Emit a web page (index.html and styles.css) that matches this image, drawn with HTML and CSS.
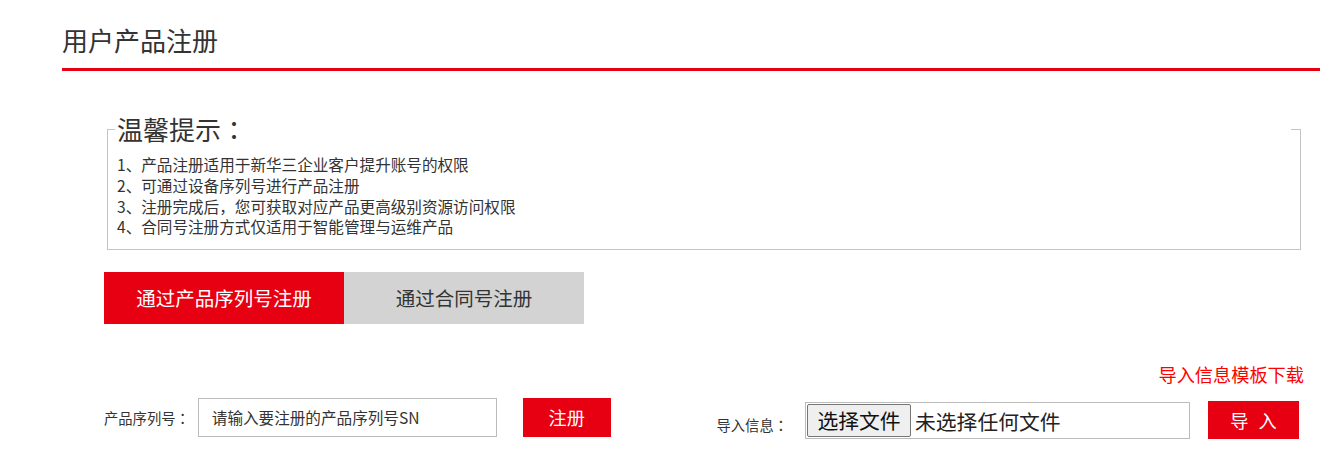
FILE: index.html
```html
<!DOCTYPE html>
<html lang="zh-CN">
<head>
<meta charset="utf-8">
<title>用户产品注册</title>
<link rel="stylesheet" href="styles.css">
</head>
<body>
<div class="page">
  <div class="header"><h1 class="title">用户产品注册</h1></div>
  <div class="content">
    <fieldset class="tips">
      <legend class="tips-legend">温馨提示<span class="punct" lang="zh-TW">：</span></legend>
      <ul class="tips-list">
        <li>1、产品注册适用于新华三企业客户提升账号的权限</li>
        <li>2、可通过设备序列号进行产品注册</li>
        <li>3、注册完成后，您可获取对应产品更高级别资源访问权限</li>
        <li>4、合同号注册方式仅适用于智能管理与运维产品</li>
      </ul>
    </fieldset>
    <div class="tabs">
      <div class="tab tab-active">通过产品序列号注册</div>
      <div class="tab">通过合同号注册</div>
    </div>
    <div class="link-row"><a class="tpl-link" href="#">导入信息模板下载</a></div>
    <div class="form-row">
      <div class="sn-form">
        <span class="field-label">产品序列号<span class="punct" lang="zh-TW">：</span></span>
        <div class="text-input">请输入要注册的产品序列号SN</div>
        <div class="btn btn-reg">注册</div>
      </div>
      <div class="import-form">
        <span class="field-label import-label">导入信息<span class="punct" lang="zh-TW">：</span></span>
        <div class="file-box">
          <span class="file-btn">选择文件</span>
          <span class="file-text">未选择任何文件</span>
        </div>
        <div class="btn btn-import">导 入</div>
      </div>
    </div>
  </div>
</div>
</body>
</html>
```
FILE: styles.css
```css
* { box-sizing: border-box; }
body {
  margin: 0;
  font-family: "Noto Sans CJK SC", "Noto Sans", sans-serif;
  color: #333;
  background: #fff;
}
.punct { font-family: "Noto Sans CJK TC", "Noto Sans CJK SC", sans-serif; }
.page { padding-left: 62px; }
.header {
  height: 71px;
  padding-top: 22px;
  border-bottom: 3px solid #e60012;
}
.title {
  margin: 0;
  font-size: 26px;
  font-weight: normal;
  line-height: 36px;
  color: #333;
}
.content { padding: 0 16px 0 42px; }
.tips {
  margin: 44px 3px 0 3px;
  padding: 0 10px 12px 9px;
  border: 1px solid #c4c4c4;
}
.tips-legend {
  width: calc(100% + 3px);
  margin-left: -2px;
  padding: 0 2px;
  font-size: 26px;
  line-height: 28px;
  color: #333;
}
.tips-list {
  list-style: none;
  margin: 11px 0 0;
  padding: 0;
  font-size: 15.6px;
  line-height: 20.8px;
  color: #333;
}
.tabs {
  display: flex;
  margin-top: 22px;
}
.tab {
  width: 240px;
  height: 52px;
  line-height: 52px;
  text-align: center;
  font-size: 19.5px;
  background: #d3d3d3;
  color: #333;
}
.tab-active { background: #e60012; color: #fff; }
.link-row {
  margin-top: 38px;
  text-align: right;
  line-height: 24px;
}
.tpl-link {
  font-size: 18.2px;
  color: #f00;
  text-decoration: none;
}
.form-row {
  display: flex;
  justify-content: space-between;
  align-items: flex-start;
}
.sn-form {
  display: flex;
  align-items: center;
  margin-top: 11px;
}
.field-label { font-size: 14.3px; line-height: 20px; color: #333; }
.text-input {
  width: 299px;
  height: 39px;
  margin-left: 8px;
  padding-left: 13px;
  border: 1px solid #bbb;
  font-size: 15.6px;
  line-height: 37px;
  color: #333;
}
.btn {
  background: #e60012;
  color: #fff;
  font-size: 18.2px;
  text-align: center;
}
.btn-reg {
  width: 88px;
  height: 39px;
  line-height: 39px;
  margin-left: 26px;
}
.import-form {
  display: flex;
  align-items: flex-end;
  margin-top: 14px;
  margin-right: 5px;
}
.import-label { line-height: 24px; margin-bottom: 2px; }
.file-box {
  display: flex;
  align-items: center;
  width: 385px;
  height: 37px;
  margin-left: 17px;
  padding: 1px;
  border: 1px solid #bbb;
}
.file-btn {
  display: block;
  width: 104px;
  height: 33px;
  line-height: 31px;
  border: 1px solid #767676;
  border-radius: 2px;
  background: #efefef;
  font-size: 20.8px;
  text-align: center;
  color: #111;
}
.file-text {
  margin-left: 4px;
  font-size: 20.8px;
  color: #222;
}
.btn-import {
  width: 91px;
  height: 38px;
  line-height: 38px;
  margin-left: 18px;
  word-spacing: 6px;
}
```
